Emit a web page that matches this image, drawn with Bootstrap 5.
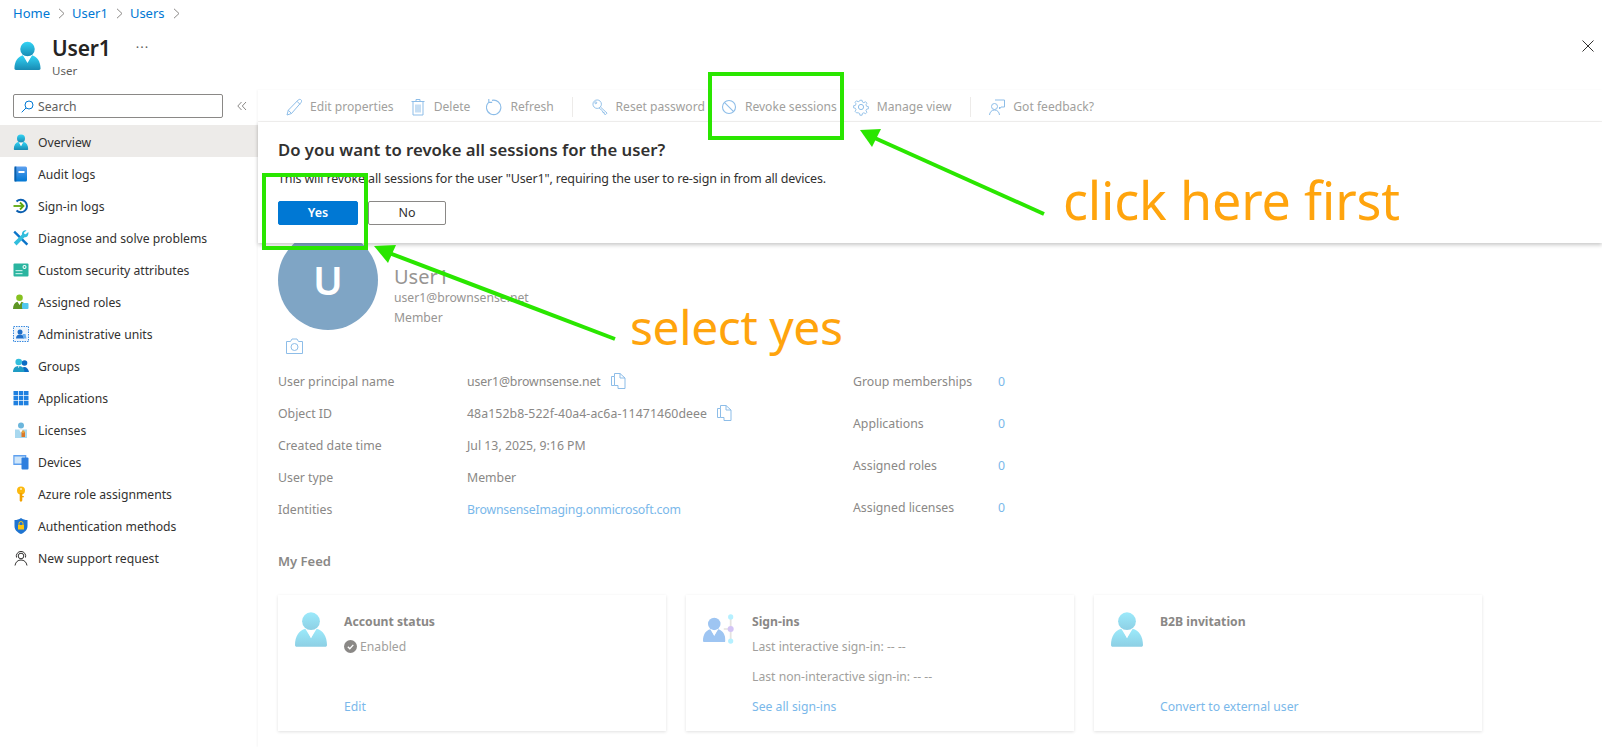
<!doctype html>
<html lang="en">
<head>
<meta charset="utf-8">
<title>User1</title>
<link href="https://cdn.jsdelivr.net/npm/bootstrap@5.3.0/dist/css/bootstrap.min.css" rel="stylesheet">
<style>
html,body{height:747px;overflow:hidden;background:#fff}
body{font-family:"Noto Sans","Open Sans",sans-serif;font-size:12.2px;line-height:18px;color:#323130;position:relative}
a{text-decoration:none}
.crumbs{height:27px;padding:0 13px;margin:0;align-items:center;--bs-breadcrumb-margin-bottom:0}
.crumbs a{color:#0078d4;font-size:13px}
.crumb-sep{margin:0 7px 0 8px;flex:none}
.head-band{height:63px;padding:8px 8px 0 14px;gap:11px}
.head-ic{width:27px;height:29px;margin-top:6px}
.head-title{font-size:21px;line-height:26px;font-weight:600;letter-spacing:-.15px;color:#252423}
.head-sub{font-size:11.5px;line-height:16px;color:#605e5c;margin-top:2px}
.head-more{margin:5px 0 0 25px;color:#605e5c;font-size:13px;line-height:14px;letter-spacing:1px}
.head-close{margin-left:auto;margin-top:5px}
.app-body{height:657px}
.side-col{width:258px;flex:none}
.side-search{height:24px;margin:4px 0 7px 13px;width:210px;border:1px solid #8a8886;border-radius:2px;padding:1px 7px 0;gap:4px;color:#605e5c}
.side-collapse{margin:11px 0 0 14px}
.side-link{height:32px;padding:4px 0 0 13px;gap:9px;color:#323130;font-size:12.2px}
.side-link.on{background:#edebe9}
.side-link svg{width:16px;height:16px;flex:none;margin-top:-2px}
.main-col{flex:1;min-width:0;position:relative;box-shadow:-1px 0 2px rgba(0,0,0,.04)}
.tool-bar{height:32px;border-bottom:1px solid #f3f2f1;padding:2px 0 0 28px;gap:16px;color:#a19f9d;font-size:12.1px}
.tool-item{gap:8px}
.tool-item svg{width:16px;height:18px;flex:none}
.tool-sep{width:1px;height:20px;background:#edebe9;margin:0 2.400px}
.confirm-pane{position:absolute;left:0;right:0;top:32px;height:121px;background:#fff;box-shadow:0 2px 4px rgba(0,0,0,.22);z-index:2;padding:17px 20px}
.confirm-title{font-size:16.7px;line-height:22px;font-weight:600;color:#323130;margin:0}
.confirm-text{margin:9px 0 0;font-size:12.5px;line-height:18px;letter-spacing:-.145px}
.btn-yes,.btn-no{width:80px;height:24px;padding:0;font-size:12.5px;line-height:22px;border-radius:2px}
.btn-yes{background:#0078d4;border:1px solid #0078d4;color:#fff;font-weight:600}
.btn-no{width:78px;background:#fff;border:1px solid #8a8886;color:#323130;margin-left:10px}
.confirm-acts{margin-top:13px}
.faded-body{padding:108px 0 0 20px;color:#8a8886;font-size:12.3px}
.ava-disc{width:100px;height:100px;border-radius:50%;background:#7fa5c5;color:#fff;font-size:40px;font-weight:600;line-height:100px;text-align:center}
.ava-name{font-size:20px;line-height:22px;margin-top:36px;color:#979593}
.ava-sub{font-size:12.2px;line-height:20px;color:#979593}
.cam-ic{display:block;margin:8px 0 0 8px;width:17px;height:16px}
.detail-wrap{margin-top:12px}
.detail-left{width:575px}
.detail-row{height:32px;align-items:center}
.detail-key{width:189px;flex:none}
.detail-copy{margin:-3px 0 0 10px;width:15px;height:16px}
.detail-right-row{height:41.9px;align-items:flex-start;padding-top:7px}
.detail-rkey{width:145px}
.faded-link{color:#7ab8ea}
.val-mail{letter-spacing:-.12px}
.val-id{letter-spacing:.08px}
.val-dir{letter-spacing:-.2px}
.feed-head{font-weight:600;font-size:13px;line-height:20px;margin:17px 0 24px}
.feed-cards{gap:20px}
.feed-box{width:388px;height:136px;background:#fff;box-shadow:0 1px 3px rgba(0,0,0,.12);padding:18px 16px 15px 17px;gap:17px;color:#a19f9d;font-size:12.2px}
.feed-ic{width:32px;height:36px;flex:none;margin-top:-2px}
.feed-ttl{font-weight:700;color:#8a8886}
.feed-line{margin-top:7px}
.feed-gap{margin-top:12px}
.status-dot{width:13px;height:13px;margin-right:3px}
.annot{position:absolute;left:0;top:0;width:1602px;height:747px;z-index:5;pointer-events:none}
.annot text{font-family:"Noto Sans",sans-serif;fill:#ffa40d}
</style>
</head>
<body>
<svg class="position-absolute" width="0" height="0" aria-hidden="true">
<defs>
<linearGradient id="gPerson" x1="0" y1="0" x2="0" y2="1"><stop offset="0" stop-color="#32d4f5"/><stop offset="1" stop-color="#198ab3"/></linearGradient>
<linearGradient id="gPale" x1="0" y1="0" x2="0" y2="1"><stop offset="0" stop-color="#9ceafb"/><stop offset="1" stop-color="#8dcfe4"/></linearGradient>
<linearGradient id="gBlue" x1="0" y1="0" x2="0" y2="1"><stop offset="0" stop-color="#5ea0ef"/><stop offset="1" stop-color="#0078d4"/></linearGradient>
<symbol id="personShape" viewBox="0 0 18 20"><circle cx="9" cy="5.600" r="5" /><path d="M0 19c0-5 2.300-8.200 5.800-9.200L9 15l3.200-5.200C15.700 10.800 18 14 18 19c0 .6-.4 1-1 1H1c-.6 0-1-.4-1-1z"/><path d="M6.900 10.800h4.200L9 15.200z" fill="#fff" opacity=".75"/></symbol>
</defs>
</svg>

<nav aria-label="breadcrumb">
<ol class="breadcrumb crumbs d-flex flex-nowrap">
<li><a href="#">Home</a></li>
<li class="d-flex"><svg class="crumb-sep" width="7" height="11" viewBox="0 0 7 11"><path d="M1 .8l5 4.700-5 4.700" fill="none" stroke="#8a8886"/></svg></li>
<li><a href="#">User1</a></li>
<li class="d-flex"><svg class="crumb-sep" width="7" height="11" viewBox="0 0 7 11"><path d="M1 .8l5 4.700-5 4.700" fill="none" stroke="#8a8886"/></svg></li>
<li><a href="#">Users</a></li>
<li class="d-flex"><svg class="crumb-sep" width="7" height="11" viewBox="0 0 7 11"><path d="M1 .8l5 4.700-5 4.700" fill="none" stroke="#8a8886"/></svg></li>
</ol>
</nav>

<header class="d-flex head-band">
<svg class="head-ic" fill="url(#gPerson)"><use href="#personShape"/></svg>
<div>
<div class="d-flex"><h1 class="head-title m-0">User1</h1><span class="head-more">···</span></div>
<div class="head-sub">User</div>
</div>
<svg class="head-close" width="12" height="12" viewBox="0 0 12 12"><path d="M.5.500l11 11m0-11l-11 11" stroke="#323130" fill="none"/></svg>
</header>

<div class="d-flex app-body">
<aside class="side-col">
<div class="d-flex">
<div class="d-flex align-items-center side-search"><svg width="13" height="13" viewBox="0 0 13 13"><circle cx="8" cy="5" r="4" fill="none" stroke="#0078d4"/><path d="M5 8l-4.300 4.300" stroke="#0078d4" fill="none"/></svg><span>Search</span></div>
<svg class="side-collapse" width="10" height="10" viewBox="0 0 10 10"><path d="M4.500 1L.8 5l3.700 4M9 1L5.300 5 9 9" fill="none" stroke="#8a8886"/></svg>
</div>
<nav class="nav flex-column">
<a class="nav-link d-flex align-items-center side-link on" href="#"><svg fill="url(#gPerson)"><use href="#personShape"/></svg>Overview</a>
<a class="nav-link d-flex align-items-center side-link" href="#"><svg viewBox="0 0 16 16"><rect x="1.500" y=".5" width="12.500" height="15" rx="1.500" fill="url(#gBlue)"/><rect x="1.500" y=".5" width="1.800" height="15" fill="#0a5ea8"/><rect x="5.500" y="5" width="6" height="2" fill="#fff"/></svg>Audit logs</a>
<a class="nav-link d-flex align-items-center side-link" href="#"><svg viewBox="0 0 16 16"><path d="M3.500 3.500a6.200 6.200 0 1 1 0 9" fill="none" stroke="#0b5fb0" stroke-width="2"/><path d="M.5 8h9.500" stroke="#5ea70c" stroke-width="1.800"/><path d="M7 4.500L10.500 8 7 11.500" fill="none" stroke="#5ea70c" stroke-width="1.800"/></svg>Sign-in logs</a>
<a class="nav-link d-flex align-items-center side-link" href="#"><svg viewBox="0 0 16 16"><path d="M2 .8l13.200 13-1.700 1.700L.4 2.500z" fill="#0a74c9"/><path d="M15.300 2l-2.600 2.300-1.400-.3-.3-1.500L13.500.4C11 -.3 8.500 1.800 9 4.500L.8 12.500l2.700 3L11.500 7.300C14 7.800 16 5 15.300 2z" fill="#32bedd"/></svg>Diagnose and solve problems</a>
<a class="nav-link d-flex align-items-center side-link" href="#"><svg viewBox="0 0 16 16"><rect x=".5" y="1.500" width="15" height="13" rx="1" fill="#2bb5a0"/><rect x="2.500" y="8" width="7" height="1.200" fill="#bdeee6"/><rect x="2.500" y="11" width="7" height="1.200" fill="#bdeee6"/><circle cx="11.500" cy="5" r="2" fill="#fff"/><circle cx="11.500" cy="5" r="1" fill="#2bb5a0"/></svg>Custom security attributes</a>
<a class="nav-link d-flex align-items-center side-link" href="#"><svg viewBox="0 0 16 16"><circle cx="6.500" cy="3.800" r="3.300" fill="#86c11f"/><path d="M0 15c0-4 2-6.500 4.500-7.200L6.500 11l2-3.200C11 8.500 13 11 13 15z" fill="#5e9624"/><rect x="9" y="9" width="6.500" height="6" rx="1" fill="#50c7ee"/></svg>Assigned roles</a>
<a class="nav-link d-flex align-items-center side-link" href="#"><svg viewBox="0 0 16 16"><rect x=".5" y=".5" width="15" height="15" fill="#eef5fc" stroke="#3a8be0" stroke-dasharray="1.500 1"/><circle cx="7" cy="6" r="2.500" fill="#1f6fc9"/><path d="M3 12.500c0-2.500 1.500-4 4-4s4 1.500 4 4z" fill="#1f6fc9"/><path d="M9.500 8h3l1 4.500h-3z" fill="#67aef0"/></svg>Administrative units</a>
<a class="nav-link d-flex align-items-center side-link" href="#"><svg viewBox="0 0 16 16"><circle cx="11.500" cy="5" r="2.800" fill="#0a6cc4"/><path d="M8 14c0-3 1.500-5 3.500-5s4 2 4.500 5z" fill="#0a6cc4"/><circle cx="5.700" cy="4" r="3.300" fill="#32bedd"/><path d="M0 14c0-4 2.500-6 5.700-6s5.700 2 5.700 6z" fill="#1f9cc4"/><path d="M4.700 8.300h2L5.700 10z" fill="#fff"/></svg>Groups</a>
<a class="nav-link d-flex align-items-center side-link" href="#"><svg viewBox="0 0 16 16" fill="#1f80e0"><rect x=".5" y="1" width="4.500" height="4.300"/><rect x="5.800" y="1" width="4.500" height="4.300"/><rect x="11" y="1" width="4.500" height="4.300"/><rect x=".5" y="6" width="4.500" height="4.300"/><rect x="5.800" y="6" width="4.500" height="4.300"/><rect x="11" y="6" width="4.500" height="4.300"/><rect x=".5" y="11" width="4.500" height="4.300"/><rect x="5.800" y="11" width="4.500" height="4.300"/><rect x="11" y="11" width="4.500" height="4.300"/></svg>Applications</a>
<a class="nav-link d-flex align-items-center side-link" href="#"><svg viewBox="0 0 16 16"><circle cx="8" cy="3.500" r="3" fill="#6cb6dc"/><rect x="2" y="7.500" width="12" height="8.500" fill="#a8d8ef"/><path d="M6 7.500h4L8 11z" fill="#fff"/><rect x="8.500" y="10" width="3.500" height="5" fill="#d9792b"/><circle cx="10.200" cy="9.700" r="1.500" fill="#e8a33d"/></svg>Licenses</a>
<a class="nav-link d-flex align-items-center side-link" href="#"><svg viewBox="0 0 16 16"><rect x=".3" y="1" width="13" height="10" fill="#5ea0ef"/><rect x="1.500" y="2.500" width="10.500" height="7" fill="#cfe6fa"/><rect x="8.500" y="3.500" width="7" height="12" rx="1" fill="#2f7fde"/></svg>Devices</a>
<a class="nav-link d-flex align-items-center side-link" href="#"><svg viewBox="0 0 16 16"><circle cx="8" cy="4.500" r="4" fill="#fcb90f"/><path d="M6.700 7h2.600v7.500L8 16l-1.300-1.300z" fill="#f2a100"/><rect x="9" y="10" width="1.800" height="1.300" fill="#f2a100"/><circle cx="8" cy="3" r="1" fill="#fff2c0"/></svg>Azure role assignments</a>
<a class="nav-link d-flex align-items-center side-link" href="#"><svg viewBox="0 0 16 16"><path d="M8 0c2 1.500 4 2 6.500 2v6c0 4-3 6.500-6.500 8-3.500-1.500-6.500-4-6.500-8V2C4 2 6 1.500 8 0z" fill="#1f74d0"/><rect x="5" y="7" width="6" height="4.500" fill="#fcc60f"/><path d="M6 7V5.500a2 2 0 0 1 4 0V7" fill="none" stroke="#fcc60f"/></svg>Authentication methods</a>
<a class="nav-link d-flex align-items-center side-link" href="#"><svg viewBox="0 0 16 16" fill="none" stroke="#323130"><circle cx="8" cy="6" r="2.800"/><path d="M3.500 7.500A4.700 4.700 0 1 1 12.500 7.500M2 15.500c.6-3.700 3-5.500 6-5.500s5.400 1.800 6 5.500"/></svg>New support request</a>
</nav>
</aside>

<main class="main-col">
<div class="d-flex align-items-center tool-bar">
<span class="d-flex align-items-center tool-item"><svg viewBox="0 0 16 18" fill="none" stroke="#8dbde8"><path d="M1 17l1.300-4.800L12.200 2c.9-.9 2.200-.8 2.900-.1s.7 1.900-.2 2.800L5.500 15.500z"/><path d="M2.300 12.200l3.200 3.300M11 3.300l3 3"/></svg>Edit properties</span>
<span class="d-flex align-items-center tool-item"><svg viewBox="0 0 16 18" fill="none" stroke="#8dbde8"><path d="M1.500 3.500h13M6 3.500V1.500h4v2M3 3.500v13.500h10V3.500M6 6.500v8M8 6.500v8M10 6.500v8"/></svg>Delete</span>
<span class="d-flex align-items-center tool-item"><svg viewBox="0 0 16 18" fill="none" stroke="#8dbde8" stroke-width="1.100"><path d="M6 2.400A7.200 7.200 0 1 1 2.600 4.300"/><path d="M2.800 1v3.400h3.400"/></svg>Refresh</span>
<span class="tool-sep"></span>
<span class="d-flex align-items-center tool-item"><svg viewBox="0 0 17 18" fill="none" stroke="#8dbde8"><circle cx="5.500" cy="6" r="4.500"/><circle cx="4" cy="4.500" r="1"/><path d="M9 9l7 6.500-1.500 1.500-1.500-.5v-1.500l-1.500-.3-.3-1.500L7.500 10"/></svg>Reset password</span>
<span class="d-flex align-items-center tool-item"><svg viewBox="0 0 16 18" fill="none" stroke="#8dbde8" stroke-width="1.100"><circle cx="8" cy="9" r="6.500"/><path d="M3.400 4.400l9.200 9.200"/></svg>Revoke sessions</span>
<span class="d-flex align-items-center tool-item"><svg viewBox="0 0 16 18" fill="none" stroke="#8dbde8"><circle cx="8" cy="9" r="2.600"/><path d="M6.800 1.500h2.400l.4 2 1.600.7 1.800-1.100 1.600 1.700-1.100 1.700.7 1.700 2 .4v2.400l-2 .4-.7 1.700 1.100 1.700-1.600 1.700-1.800-1.100-1.600.7-.4 2H6.800l-.4-2-1.600-.7L3 15.500l-1.600-1.700 1.100-1.700-.7-1.700-2-.4V7.600l2-.4.7-1.700-1.100-1.700L3 2.100l1.800 1.100 1.600-.7z" transform="translate(.8 .9) scale(.9)"/></svg>Manage view</span>
<span class="tool-sep"></span>
<span class="d-flex align-items-center tool-item"><svg viewBox="0 0 16 18" fill="none" stroke="#8dbde8"><circle cx="5.500" cy="8.500" r="3"/><path d="M.5 17c.3-3 2.200-5 5-5s4.700 2 5 5M6 2h9.500v7H12l-1.500 2V9"/></svg>Got feedback?</span>
</div>

<section class="confirm-pane">
<h2 class="confirm-title">Do you want to revoke all sessions for the user?</h2>
<p class="confirm-text">This will revoke all sessions for the user "User1", requiring the user to re-sign in from all devices.</p>
<div class="confirm-acts d-flex"><button type="button" class="btn btn-yes">Yes</button><button type="button" class="btn btn-no">No</button></div>
</section>

<div class="faded-body">
<div class="d-flex gap-3">
<div>
<div class="ava-disc">U</div>
<svg class="cam-ic" viewBox="0 0 17 16" fill="none" stroke="#8dbde8"><path d="M.5 3.500h4L6 1h5l1.500 2.500h4v12H.5z"/><circle cx="8.500" cy="9" r="3.500"/></svg>
</div>
<div>
<div class="ava-name">User1</div>
<div class="ava-sub">user1@brownsense.net</div>
<div class="ava-sub">Member</div>
</div>
</div>

<div class="d-flex detail-wrap">
<div class="detail-left">
<div class="d-flex detail-row"><span class="detail-key">User principal name</span><span class="val-mail">user1@brownsense.net</span><svg class="detail-copy" viewBox="0 0 15 16" fill="none" stroke="#8dbde8"><path d="M3.500 3.500V.5H9L14 5v10.500H7M3.500 3.500H.5v9h3zM3.500 12.500H7v3M9 .5V5h5"/></svg></div>
<div class="d-flex detail-row"><span class="detail-key">Object ID</span><span class="val-id">48a152b8-522f-40a4-ac6a-11471460deee</span><svg class="detail-copy" viewBox="0 0 15 16" fill="none" stroke="#8dbde8"><path d="M3.500 3.500V.5H9L14 5v10.500H7M3.500 3.500H.5v9h3zM3.500 12.500H7v3M9 .5V5h5"/></svg></div>
<div class="d-flex detail-row"><span class="detail-key">Created date time</span><span>Jul 13, 2025, 9:16 PM</span></div>
<div class="d-flex detail-row"><span class="detail-key">User type</span><span>Member</span></div>
<div class="d-flex detail-row"><span class="detail-key">Identities</span><a class="faded-link val-dir" href="#">BrownsenseImaging.onmicrosoft.com</a></div>
</div>
<div>
<div class="d-flex detail-right-row"><span class="detail-rkey">Group memberships</span><a class="faded-link" href="#">0</a></div>
<div class="d-flex detail-right-row"><span class="detail-rkey">Applications</span><a class="faded-link" href="#">0</a></div>
<div class="d-flex detail-right-row"><span class="detail-rkey">Assigned roles</span><a class="faded-link" href="#">0</a></div>
<div class="d-flex detail-right-row"><span class="detail-rkey">Assigned licenses</span><a class="faded-link" href="#">0</a></div>
</div>
</div>

<div class="feed-head">My Feed</div>
<div class="d-flex feed-cards">
<article class="d-flex feed-box">
<svg class="feed-ic" fill="url(#gPale)"><use href="#personShape"/></svg>
<div class="d-flex flex-column flex-grow-1">
<div class="feed-ttl">Account status</div>
<div class="d-flex align-items-center feed-line"><svg class="status-dot" viewBox="0 0 13 13"><circle cx="6.500" cy="6.500" r="6.500" fill="#8a8886"/><path d="M3.800 6.700l2 2 3.500-3.800" fill="none" stroke="#fff" stroke-width="1.300"/></svg>Enabled</div>
<a class="faded-link mt-auto" href="#">Edit</a>
</div>
</article>
<article class="d-flex feed-box">
<svg class="feed-ic" viewBox="0 0 37 36" width="37"><use href="#personShape" x="0" y="4" width="26" height="29" fill="#9ec5f2"/><path d="M24 18h8M32 4v28" stroke="#e4e2e0" stroke-width="2"/><circle cx="32" cy="4" r="3" fill="#b5f0ff"/><circle cx="32" cy="18" r="3.500" fill="#d3c4f5"/><circle cx="32" cy="32" r="3" fill="#b5f0ff"/></svg>
<div class="d-flex flex-column flex-grow-1">
<div class="feed-ttl">Sign-ins</div>
<div class="feed-line">Last interactive sign-in: -- --</div>
<div class="feed-gap">Last non-interactive sign-in: -- --</div>
<a class="faded-link mt-auto" href="#">See all sign-ins</a>
</div>
</article>
<article class="d-flex feed-box">
<svg class="feed-ic" fill="url(#gPale)"><use href="#personShape"/></svg>
<div class="d-flex flex-column flex-grow-1">
<div class="feed-ttl">B2B invitation</div>
<a class="faded-link mt-auto" href="#">Convert to external user</a>
</div>
</article>
</div>
</div>
</main>
</div>

<svg class="annot" viewBox="0 0 1602 747">
<g fill="none" stroke="#2ae600" stroke-width="4">
<rect x="710" y="74" width="132" height="64"/>
<rect x="264" y="175" width="102" height="73"/>
<path d="M1044 214L868 135"/>
<path d="M615 339L384 251"/>
</g>
<path d="M860 130L881 129 872 147z" fill="#2ae600"/>
<path d="M374 246L396 245 388 263z" fill="#2ae600"/>
<text x="1063" y="220" font-size="52" textLength="337">click here first</text>
<text x="630" y="345" font-size="48" textLength="213">select yes</text>
</svg>
<script src="https://cdn.jsdelivr.net/npm/bootstrap@5.3.0/dist/js/bootstrap.bundle.min.js"></script>
</body>
</html>
